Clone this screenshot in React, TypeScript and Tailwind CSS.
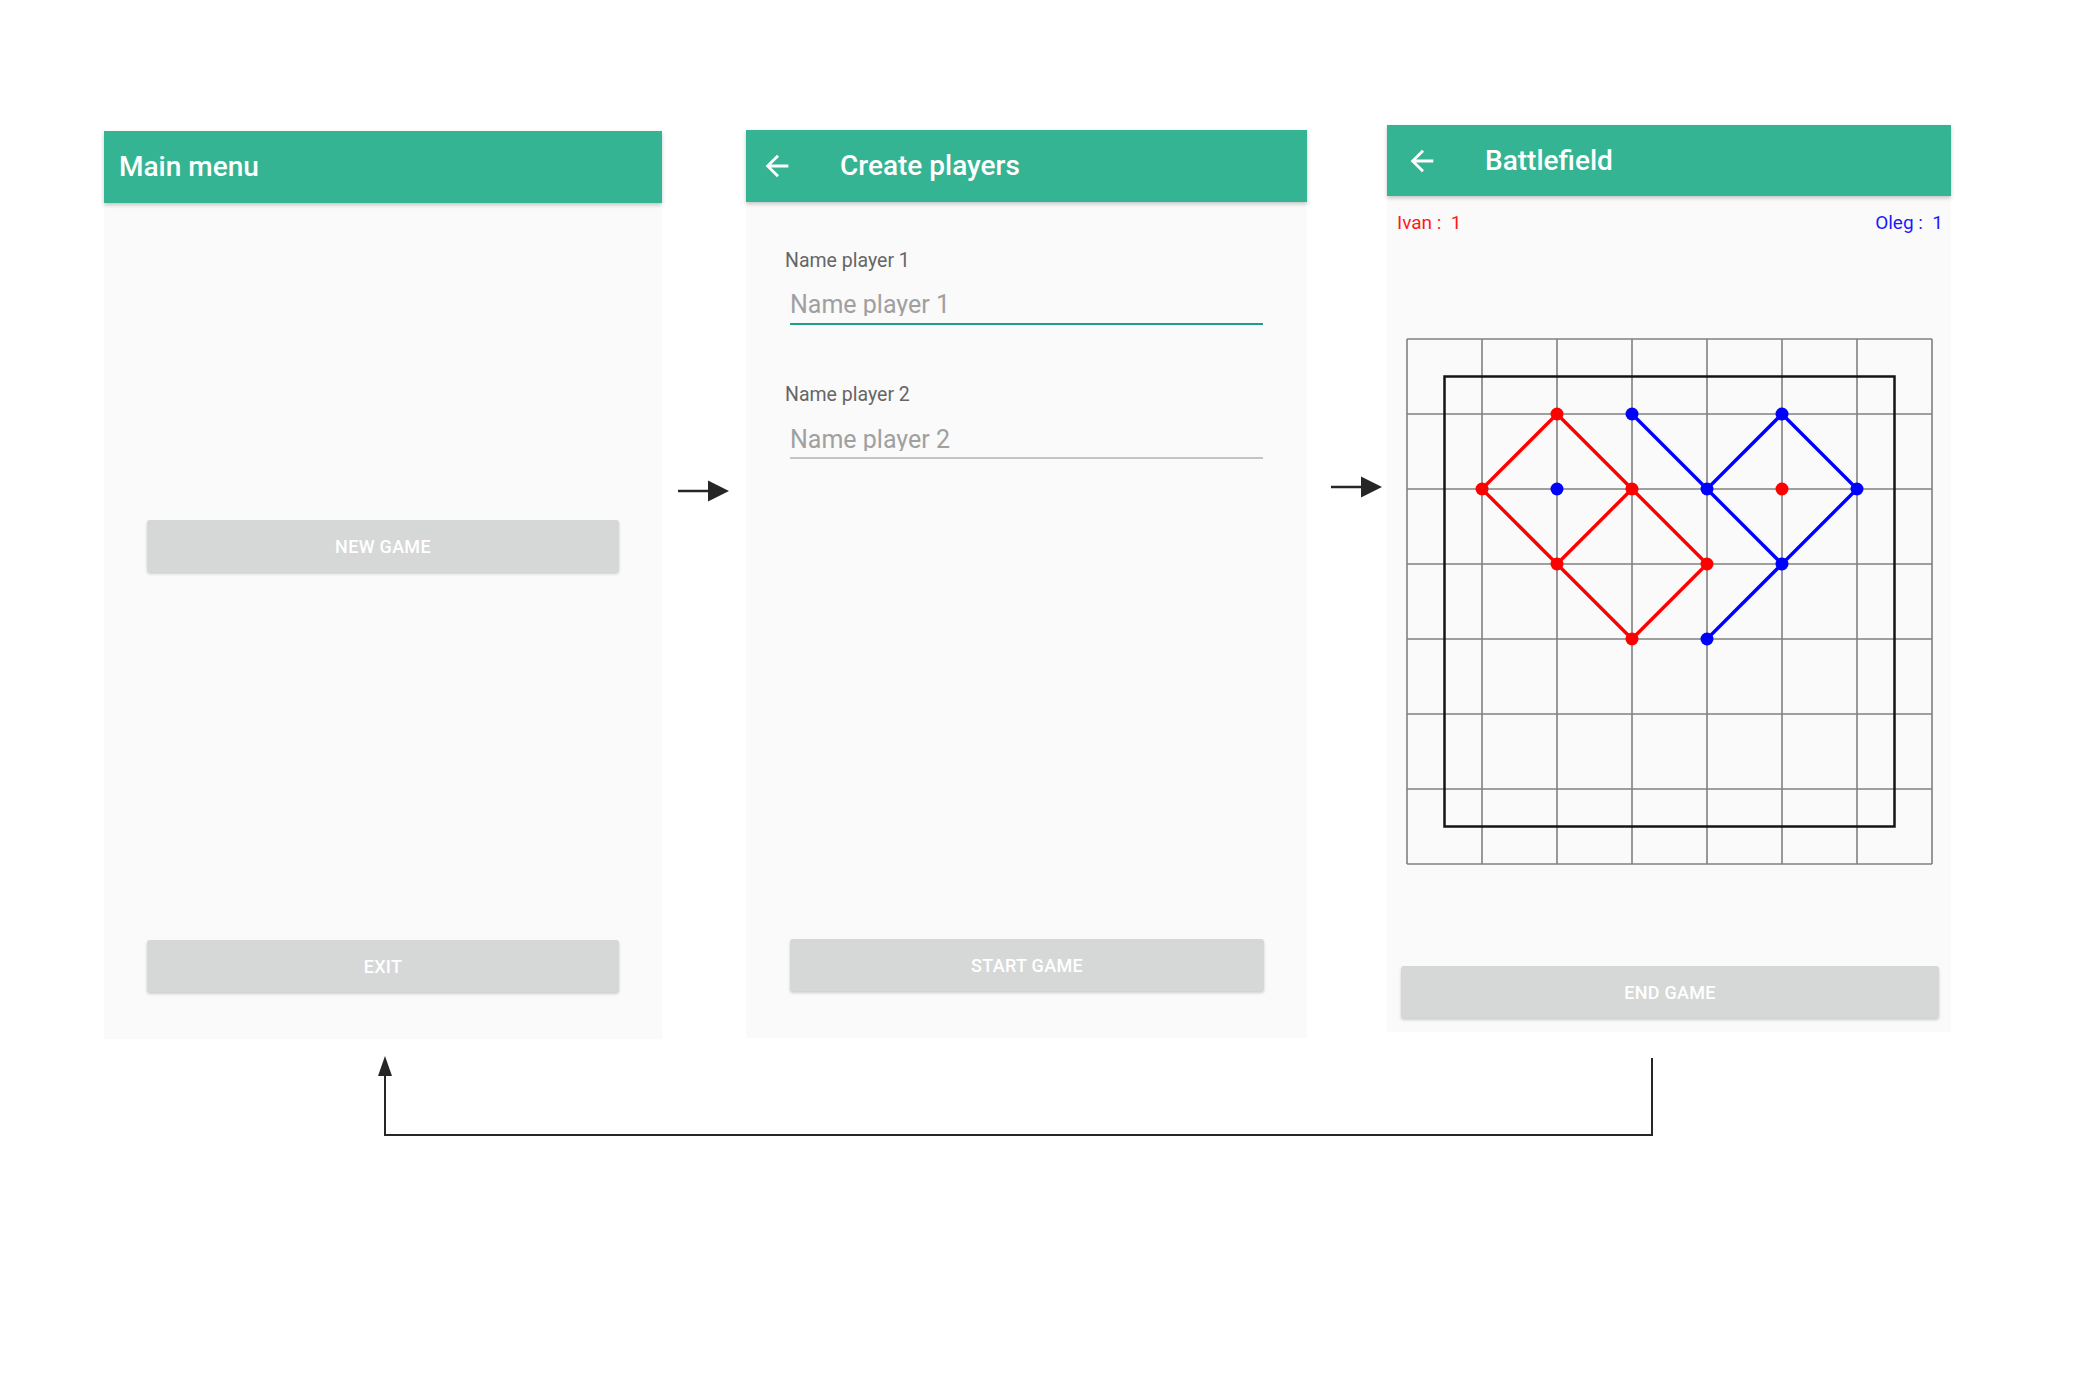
import React from "react"

const font = { fontFamily: "Roboto, 'Noto Sans', Arial, sans-serif" }

function BackArrow() {
  return (
    <svg width="34" height="34" viewBox="0 0 24 24" fill="#ffffff">
      <path d="M20 11H7.83l5.59-5.59L12 4l-8 8 8 8 1.41-1.41L7.83 13H20v-2z" />
    </svg>
  )
}

function GreyButton({ label }: { label: string }) {
  return (
    <div className="flex h-[52px] items-center justify-center rounded-[3px] bg-[#d6d7d7] text-[18px] font-medium uppercase tracking-[0.3px] text-white shadow-[0_2px_3px_rgba(0,0,0,0.18)]">
      {label}
    </div>
  )
}

function FlowArrow() {
  return (
    <svg width="51" height="22" viewBox="0 0 51 22">
      <line x1="0" y1="11" x2="32" y2="11" stroke="#262626" strokeWidth="2.5" />
      <polygon points="30,0.5 51,11 30,21.5" fill="#262626" />
    </svg>
  )
}

function MainMenu() {
  return (
    <div className="mt-[6px] flex h-[908px] w-[558px] flex-col bg-[#fafafa]">
      <div className="relative z-10 flex h-[72px] items-center bg-[#35b493] pl-[15px] shadow-[0_2px_4px_rgba(0,0,0,0.22)]">
        <span className="text-[28px] font-medium text-white">Main menu</span>
      </div>
      <div className="flex flex-col px-[43px] pt-[317px]">
        <GreyButton label="New game" />
        <div className="mt-[368px]">
          <GreyButton label="Exit" />
        </div>
      </div>
    </div>
  )
}

function CreatePlayers() {
  return (
    <div className="mt-[5px] flex h-[908px] w-[561px] flex-col bg-[#fafafa]">
      <div className="relative z-10 flex h-[72px] items-center gap-[46px] bg-[#35b493] pl-[14px] shadow-[0_2px_4px_rgba(0,0,0,0.22)]">
        <BackArrow />
        <span className="text-[28px] font-medium text-white">Create players</span>
      </div>
      <div className="flex flex-col pl-[39px] pr-[44px] pt-[50px]">
        <div className="h-[18px] text-[19.5px] leading-[18px] text-[#666666]">Name player 1</div>
        <input
          placeholder="Name player 1"
          className="mt-[22px] ml-[5px] h-[24px] bg-transparent text-[25px] leading-none text-[#333] outline-none placeholder:text-[#a0a0a0]"
        />
        <div className="mt-[7px] ml-[5px] h-[2px] bg-[#1f9e8b]" />
        <div className="mt-[61px] h-[18px] text-[19.5px] leading-[18px] text-[#666666]">Name player 2</div>
        <input
          placeholder="Name player 2"
          className="mt-[23px] ml-[5px] h-[24px] bg-transparent text-[25px] leading-none text-[#333] outline-none placeholder:text-[#a0a0a0]"
        />
        <div className="mt-[6px] ml-[5px] h-[2px] bg-[#c4c4c4]" />
        <div className="mt-[480px] ml-[5px] -mr-[1px]">
          <GreyButton label="Start game" />
        </div>
      </div>
    </div>
  )
}

const red = "#ff0000"
const blue = "#0000ff"
const cell = 75
const off = 1

type Pt = [number, number]

const redLines: [Pt, Pt][] = [
  [[2, 1], [1, 2]],
  [[1, 2], [2, 3]],
  [[2, 1], [3, 2]],
  [[3, 2], [2, 3]],
  [[3, 2], [4, 3]],
  [[2, 3], [3, 4]],
  [[3, 4], [4, 3]],
]
const blueLines: [Pt, Pt][] = [
  [[3, 1], [4, 2]],
  [[4, 2], [5, 1]],
  [[5, 1], [6, 2]],
  [[6, 2], [5, 3]],
  [[4, 2], [5, 3]],
  [[5, 3], [4, 4]],
]
const redDots: Pt[] = [[2, 1], [1, 2], [3, 2], [2, 3], [4, 3], [3, 4], [5, 2]]
const blueDots: Pt[] = [[3, 1], [4, 2], [5, 1], [6, 2], [5, 3], [4, 4], [2, 2]]

const p = (v: number) => off + v * cell

function Board() {
  const idx = [0, 1, 2, 3, 4, 5, 6, 7]
  return (
    <svg width="527" height="527" viewBox="0 0 527 527">
      {idx.map((i) => (
        <line key={"v" + i} x1={p(i)} y1={p(0)} x2={p(i)} y2={p(7)} stroke="#808080" strokeWidth="1.6" />
      ))}
      {idx.map((i) => (
        <line key={"h" + i} x1={p(0)} y1={p(i)} x2={p(7)} y2={p(i)} stroke="#808080" strokeWidth="1.6" />
      ))}
      <rect x={p(0.5)} y={p(0.5)} width={cell * 6} height={cell * 6} fill="none" stroke="#151515" strokeWidth="2.5" />
      {redLines.map(([a, b], i) => (
        <line key={"rl" + i} x1={p(a[0])} y1={p(a[1])} x2={p(b[0])} y2={p(b[1])} stroke={red} strokeWidth="3.4" />
      ))}
      {blueLines.map(([a, b], i) => (
        <line key={"bl" + i} x1={p(a[0])} y1={p(a[1])} x2={p(b[0])} y2={p(b[1])} stroke={blue} strokeWidth="3.4" />
      ))}
      {redDots.map(([x, y], i) => (
        <circle key={"rd" + i} cx={p(x)} cy={p(y)} r="6.5" fill={red} />
      ))}
      {blueDots.map(([x, y], i) => (
        <circle key={"bd" + i} cx={p(x)} cy={p(y)} r="6.5" fill={blue} />
      ))}
    </svg>
  )
}

function Battlefield() {
  return (
    <div className="flex h-[907px] w-[564px] flex-col bg-[#fafafa]">
      <div className="relative z-10 flex h-[71px] items-center gap-[46px] bg-[#35b493] pl-[18px] shadow-[0_2px_4px_rgba(0,0,0,0.22)]">
        <BackArrow />
        <span className="text-[28px] font-medium text-white">Battlefield</span>
      </div>
      <div className="mt-[18px] flex h-[18px] justify-between pl-[10px] pr-[8px] text-[19px] leading-[18px]">
        <span className="whitespace-pre text-[#ff1a1a]">Ivan :  1</span>
        <span className="whitespace-pre text-[#1a1aff]">Oleg :  1</span>
      </div>
      <div className="mt-[106px] pl-[19px]">
        <Board />
      </div>
      <div className="mt-[101px] pl-[14px] pr-[12px]">
        <GreyButton label="End game" />
      </div>
    </div>
  )
}

export default function App() {
  return (
    <div className="h-[1381px] w-[2094px] overflow-hidden bg-white" style={font}>
      <div className="flex items-start pl-[104px] pt-[125px]">
        <MainMenu />
        <div className="ml-[16px] mr-[17px] mt-[355px]">
          <FlowArrow />
        </div>
        <CreatePlayers />
        <div className="ml-[24px] mr-[5px] mt-[351px]">
          <FlowArrow />
        </div>
        <Battlefield />
      </div>
      <div className="ml-[370px] mt-[11px]">
        <svg width="1290" height="90" viewBox="0 0 1290 90">
          <polyline points="15,24 15,85 1282,85 1282,8" fill="none" stroke="#262626" strokeWidth="2" />
          <polygon points="15,6 8,26 22,26" fill="#262626" />
        </svg>
      </div>
    </div>
  )
}
